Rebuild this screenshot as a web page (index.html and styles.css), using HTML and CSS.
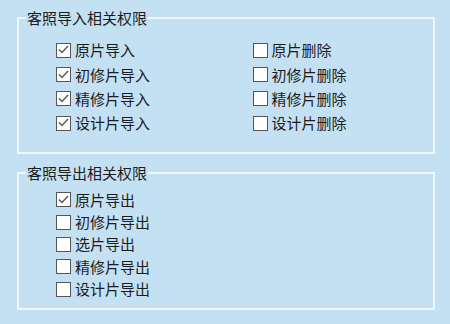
FILE: index.html
```html
<!DOCTYPE html>
<html lang="zh-CN">
<head>
<meta charset="utf-8">
<link rel="stylesheet" href="styles.css">
</head>
<body>
<div class="page">
  <fieldset class="group group-import">
    <legend class="group-title">客照导入相关权限</legend>
    <div class="grid grid-import">
      <label class="item"><span class="box"><svg viewBox="0 0 15 15" width="15" height="15"><polyline points="3,7.5 6,10.5 12,4" /></svg></span><span class="text">原片导入</span></label>
      <label class="item"><span class="box"></span><span class="text">原片删除</span></label>
      <label class="item"><span class="box"><svg viewBox="0 0 15 15" width="15" height="15"><polyline points="3,7.5 6,10.5 12,4" /></svg></span><span class="text">初修片导入</span></label>
      <label class="item"><span class="box"></span><span class="text">初修片删除</span></label>
      <label class="item"><span class="box"><svg viewBox="0 0 15 15" width="15" height="15"><polyline points="3,7.5 6,10.5 12,4" /></svg></span><span class="text">精修片导入</span></label>
      <label class="item"><span class="box"></span><span class="text">精修片删除</span></label>
      <label class="item"><span class="box"><svg viewBox="0 0 15 15" width="15" height="15"><polyline points="3,7.5 6,10.5 12,4" /></svg></span><span class="text">设计片导入</span></label>
      <label class="item"><span class="box"></span><span class="text">设计片删除</span></label>
    </div>
  </fieldset>
  <fieldset class="group group-export">
    <legend class="group-title">客照导出相关权限</legend>
    <div class="grid grid-export">
      <label class="item"><span class="box"><svg viewBox="0 0 15 15" width="15" height="15"><polyline points="3,7.5 6,10.5 12,4" /></svg></span><span class="text">原片导出</span></label>
      <label class="item"><span class="box"></span><span class="text">初修片导出</span></label>
      <label class="item"><span class="box"></span><span class="text">选片导出</span></label>
      <label class="item"><span class="box"></span><span class="text">精修片导出</span></label>
      <label class="item"><span class="box"></span><span class="text">设计片导出</span></label>
    </div>
  </fieldset>
</div>
</body>
</html>
```
FILE: styles.css
```css
html, body {
  margin: 0;
  padding: 0;
  background: #c4e1f3;
}
body {
  width: 450px;
  height: 324px;
  overflow: hidden;
  font-family: "Noto Sans CJK SC", "Noto Sans", sans-serif;
  font-size: 15px;
  color: #1c1c1c;
}
.page {
  padding: 8px 15px 0 17px;
  display: flex;
  flex-direction: column;
}
.group {
  margin: 0;
  padding: 0;
  border: 2px solid #eef6fb;
  min-width: 0;
}
.group-title {
  margin-left: 7px;
  padding: 0 1px;
  line-height: 20px;
  height: 20px;
  color: #1c1c1c;
}
.grid {
  display: grid;
  grid-template-columns: 196.5px auto;
  padding-left: 37px;
}
.grid-import {
  grid-auto-rows: 24.4px;
  padding-top: 10px;
  padding-bottom: 16px;
}
.group-export {
  margin-top: 9px;
}
.grid-export {
  grid-template-columns: auto;
  grid-auto-rows: 22.35px;
  padding-top: 6px;
  padding-bottom: 8px;
}
.item {
  display: flex;
  align-items: center;
  gap: 4px;
  white-space: nowrap;
}
.box {
  width: 15px;
  height: 15px;
  box-sizing: border-box;
  border: 1.5px solid #555;
  background: #fff;
  flex: none;
  position: relative;
}
.box svg {
  position: absolute;
  left: -1.5px;
  top: -1.5px;
}
.box polyline {
  fill: none;
  stroke: #5a5a5a;
  stroke-width: 1.5;
}
.text {
  line-height: 20px;
}
```
